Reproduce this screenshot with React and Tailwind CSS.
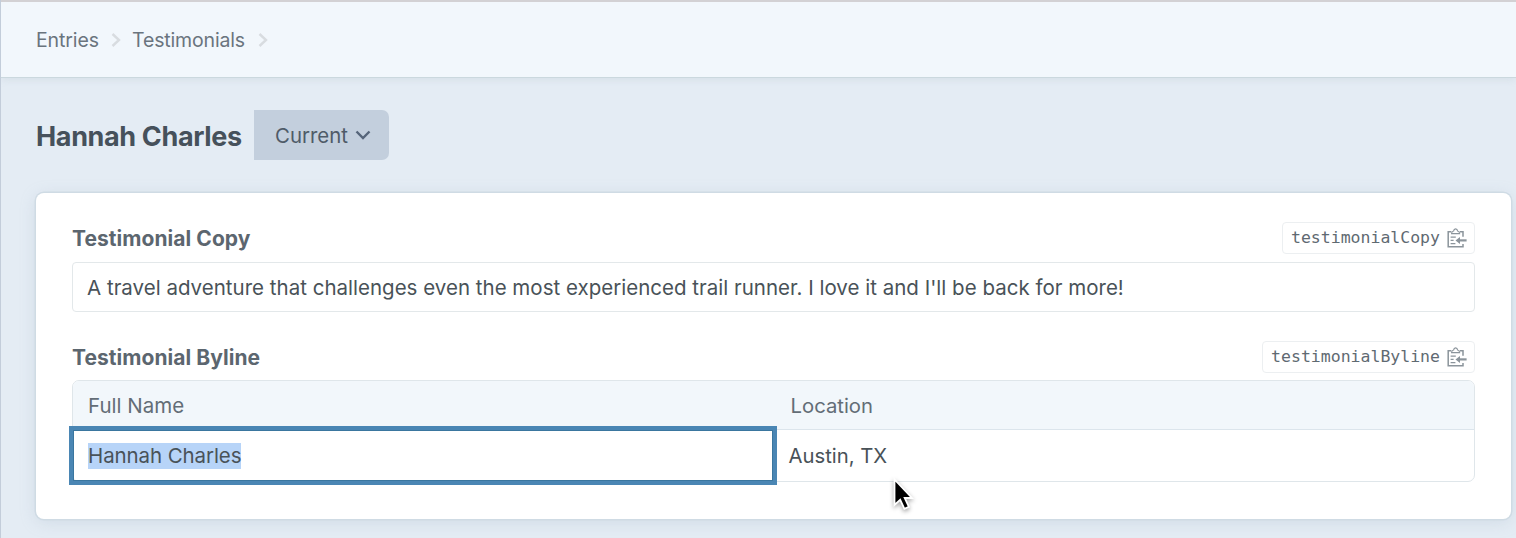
import React from "react";

function Chevron() {
  return (
    <svg width="10" height="16" viewBox="0 0 10 16" fill="none" stroke="#d8dce0" strokeWidth="2.4" className="shrink-0">
      <path d="M1.500 2 8 8 1.500 14" />
    </svg>
  );
}

function ClipboardIcon() {
  return (
    <svg width="20" height="20" viewBox="0 0 20 20" fill="none" stroke="#8b949b" strokeWidth="1.5" className="shrink-0">
      <path d="M4.300 3.700H1.200v15H16v-2.700M12.900 3.700H16v5" />
      <path d="M4.600 5.600h8c0-1.500-.7-2.400-2-2.600C10.400 1.600 9.700.9 8.600.9s-1.800.7-2 2.100c-1.300.2-2 1.100-2 2.600Z" fill="#fff" strokeWidth="1.200" />
      <path d="M3.600 9.200h5.200M3.600 12.400h3M3.600 15.600h4.800" strokeWidth="1.200" />
      <path d="M19.600 12.400H11" strokeWidth="2.2" />
      <path d="m13 8.900-4.500 3.500 4.500 3.500Z" fill="#8b949b" stroke="none" />
    </svg>
  );
}

function Handle({ name }) {
  return (
    <div className="flex h-8 items-center gap-[7px] rounded-[4px] border border-[#eceff1] bg-white pr-[7px] pl-2">
      <code className="font-['DejaVu_Sans_Mono',monospace] text-[16.5px] leading-none text-[#5f6a72]">{name}</code>
      <ClipboardIcon />
    </div>
  );
}

export default function App() {
  return (
    <div className="relative flex h-[538px] w-full flex-col overflow-hidden border-l border-[#c3cdda] bg-[#e4ecf4] font-['Inter',sans-serif] text-[20.5px] text-[#495258]">
      <header className="z-10 flex h-[78px] shrink-0 items-center gap-[11px] border-t-2 border-b border-t-[#d3d1d4] border-b-[#cbd8de] bg-[#f2f7fc] pl-[35px] text-[#6a747e] shadow-[0_1px_8px_rgba(150,165,175,0.2)]">
        <span className="w-[64px] pt-[2px] text-[19.5px] tracking-[-0.1px] whitespace-nowrap">Entries</span>
        <Chevron />
        <span className="w-[115px] pt-[2px] text-[19.5px] tracking-[-0.15px] whitespace-nowrap">Testimonials</span>
        <Chevron />
      </header>
      <div className="mt-[32px] flex h-[50px] shrink-0 items-center pl-[35px]">
        <h1 className="w-[218px] pt-[4px] text-[27px] font-bold tracking-[-0.36px] whitespace-nowrap text-[#46515b]">Hannah Charles</h1>
        <button className="flex h-[50px] w-[135px] items-center gap-[7px] rounded-r-[7px] bg-[#c3cfdd] pl-[21px] text-[20.4px] text-[#4f5b68]">
          <span className="pt-[2px]">Current</span>
          <svg width="16" height="10" viewBox="0 0 16 10" fill="none" stroke="#56657a" strokeWidth="2.4">
            <path d="m1.500 1.500 6.500 6.500 6.500-6.500" />
          </svg>
        </button>
      </div>
      <main className="mt-[33px] mr-[5px] ml-[35px] flex h-[326px] shrink-0 flex-col rounded-[8px] bg-white px-[36px] pt-[29px] shadow-[0_0_0_1.500px_#cfdbe4,0_3px_16px_rgba(150,170,190,0.26)]">
        <div className="flex h-8 items-center justify-between">
          <label className="pt-px text-[21px] font-bold tracking-[0.05px] text-[#5c666f]">Testimonial Copy</label>
          <Handle name="testimonialCopy" />
        </div>
        <div className="mt-2 flex h-[50px] items-center rounded-[4px] border border-[#e3e8ea] px-[14px]">
          <span className="pt-[2px] whitespace-nowrap tracking-[0.01px]">A travel adventure that challenges even the most experienced trail runner. I love it and I'll be back for more!</span>
        </div>
        <div className="mt-[29px] flex h-8 items-center justify-between">
          <label className="pt-[2px] text-[21px] font-bold tracking-[0.05px] text-[#5c666f]">Testimonial Byline</label>
          <Handle name="testimonialByline" />
        </div>
        <div className="mt-[7px] h-[102px] rounded-[7px] border border-[#dfe6ea]">
          <div className="grid h-[49px] grid-cols-2 items-center rounded-t-[6px] border-b border-[#dce5ec] bg-[#f2f7fb] text-[#636d76]">
            <span className="pt-[3px] pl-[15px]">Full Name</span>
            <span className="pt-[3px] pl-[17px] text-[20.3px]">Location</span>
          </div>
          <div className="grid h-[51px] grid-cols-2 items-center">
            <div className="mr-px flex h-[51px] items-center pl-[15px] shadow-[inset_0_0_0_1px_#3a769f,0_0_0_4px_#4a86b4]">
              <span className="bg-[#b7d4f8] leading-[26px] tracking-[-0.1px]">Hannah Charles</span>
            </div>
            <span className="pt-px pl-[15px] text-[20.3px]">Austin, TX</span>
          </div>
        </div>
      </main>
      <svg className="absolute top-[476px] left-[889px] drop-shadow-[0_2px_2px_rgba(0,0,0,0.35)]" width="26" height="38" viewBox="0 0 26 38">
        <path d="M4.500 3.500v25.500l5.700-5.200 4.200 9 4.500-2-4.200-8.800h7.300Z" fill="#000" stroke="#fff" strokeWidth="1.800" />
      </svg>
    </div>
  );
}
